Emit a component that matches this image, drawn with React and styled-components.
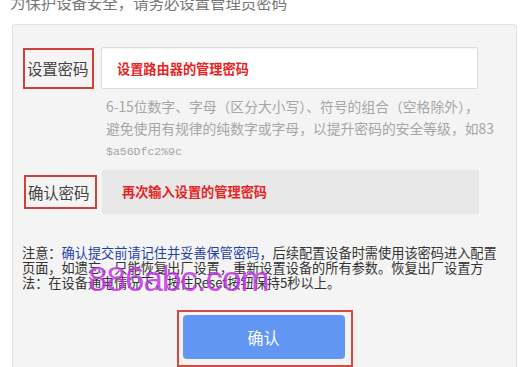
import React from "react";
import styled, { createGlobalStyle } from "styled-components";

const GlobalStyle = createGlobalStyle`
  html, body { margin: 0; padding: 0; background: #ffffff; overflow: hidden; }
  body { font-family: "Noto Sans CJK SC", "Noto Sans", sans-serif; }
`;

const Page = styled.div`
  width: 527px;
  height: 367px;
  overflow: hidden;
  padding-left: 10px;
  box-sizing: border-box;
`;

const Title = styled.div`
  margin-top: -6px;
  height: 16px;
  line-height: 16px;
  font-size: 15.4px;
  color: #777;
  white-space: nowrap;
`;

const Panel = styled.div`
  margin: 14px 0 0 2px;
  width: 505px;
  height: 400px;
  box-sizing: border-box;
  background: #f4f4f4;
  border: 1px solid #e1e1e1;
  border-radius: 3px;
  padding: 22px 10px 0 10px;
`;

const Row = styled.div`
  display: flex;
  align-items: center;
  margin-top: ${(p) => p.$top || 0}px;
`;

const Label = styled.div`
  box-sizing: border-box;
  width: ${(p) => p.$w}px;
  height: ${(p) => p.$h}px;
  margin-left: ${(p) => p.$ml || 0}px;
  margin-right: ${(p) => p.$mr}px;
  border: 2px solid #d2403c;
  padding-left: 2px;
  display: flex;
  align-items: center;
  font-size: 15.5px;
  color: #444;
  white-space: nowrap;
  letter-spacing: -0.2px;
`;

const Input = styled.div`
  box-sizing: border-box;
  width: 377px;
  height: ${(p) => p.$h}px;
  border-radius: 2px;
  background: ${(p) => (p.$disabled ? "#e8e8e8" : "#ffffff")};
  border: 1px solid ${(p) => (p.$disabled ? "#e6e6e6" : "#dcdcdc")};
  box-shadow: ${(p) => (p.$disabled ? "none" : "inset 0 1px 1px rgba(0,0,0,0.05)")};
  padding-left: ${(p) => p.$pl}px;
  display: flex;
  align-items: center;
  font-size: 13.2px;
  font-weight: 700;
  color: #e8231f;
  white-space: nowrap;
`;

const Hint = styled.div`
  margin: 7px 0 0 83px;
  font-size: 13.8px;
  line-height: 21.5px;
  color: #a6a6a6;
  white-space: nowrap;
`;

const Mono = styled.span`
  font-family: "Liberation Mono", monospace;
  font-size: 11.5px;
  color: #a4a4a4;
`;

const Note = styled.div`
  position: relative;
  margin: 31px 0 0 -1px;
  font-size: 13.2px;
  line-height: 15px;
  color: #333;
  white-space: nowrap;
`;

const Line = styled.div``;

const Em = styled.span`
  color: #1f3fae;
`;

const Watermark = styled.div`
  position: absolute;
  left: 66px;
  top: 16px;
  font-family: "Liberation Sans", Arial, sans-serif;
  font-size: 35px;
  line-height: 35px;
  letter-spacing: -1px;
  color: rgba(196, 52, 228, 0.85);
  pointer-events: none;
`;

const ButtonFrame = styled.div`
  margin: 20px auto 0;
  width: 176px;
  height: 57px;
  box-sizing: border-box;
  border: 2px solid #d94743;
  padding: 3px 6px 0 4px;
`;

const Button = styled.button`
  display: block;
  width: 162px;
  height: 44px;
  border: none;
  border-radius: 4px;
  background: #6196f5;
  color: #ffffff;
  font-family: "Noto Sans CJK SC", sans-serif;
  font-size: 16px;
  padding: 0;
`;

export default function App() {
  return (
    <>
      <GlobalStyle />
      <Page>
        <Title>为保护设备安全，请务必设置管理员密码</Title>
        <Panel>
          <Row>
            <Label $w={71} $h={41} $mr={7}>设置密码</Label>
            <Input $h={42} $pl={15}>设置路由器的管理密码</Input>
          </Row>
          <Hint>
            <Line>6-15位数字、字母（区分大小写）、符号的组合（空格除外），</Line>
            <Line>避免使用有规律的纯数字或字母，以提升密码的安全等级，如83</Line>
            <Line>
              <Mono>$a56Dfc2%9c</Mono>
            </Line>
          </Hint>
          <Row $top={7}>
            <Label $w={73} $h={34} $ml={1} $mr={5}>确认密码</Label>
            <Input $h={44} $pl={19} $disabled>再次输入设置的管理密码</Input>
          </Row>
          <Note>
            <Line>
              注意：<Em>确认提交前请记住并妥善保管密码</Em>，后续配置设备时需使用该密码进入配置
            </Line>
            <Line>页面，如遗忘，只能恢复出厂设置，重新设置设备的所有参数。恢复出厂设置方</Line>
            <Line>法：在设备通电情况下，按住Reset按钮保持5秒以上。</Line>
            <Watermark>886abc.com</Watermark>
          </Note>
          <ButtonFrame>
            <Button>确认</Button>
          </ButtonFrame>
        </Panel>
      </Page>
    </>
  );
}
